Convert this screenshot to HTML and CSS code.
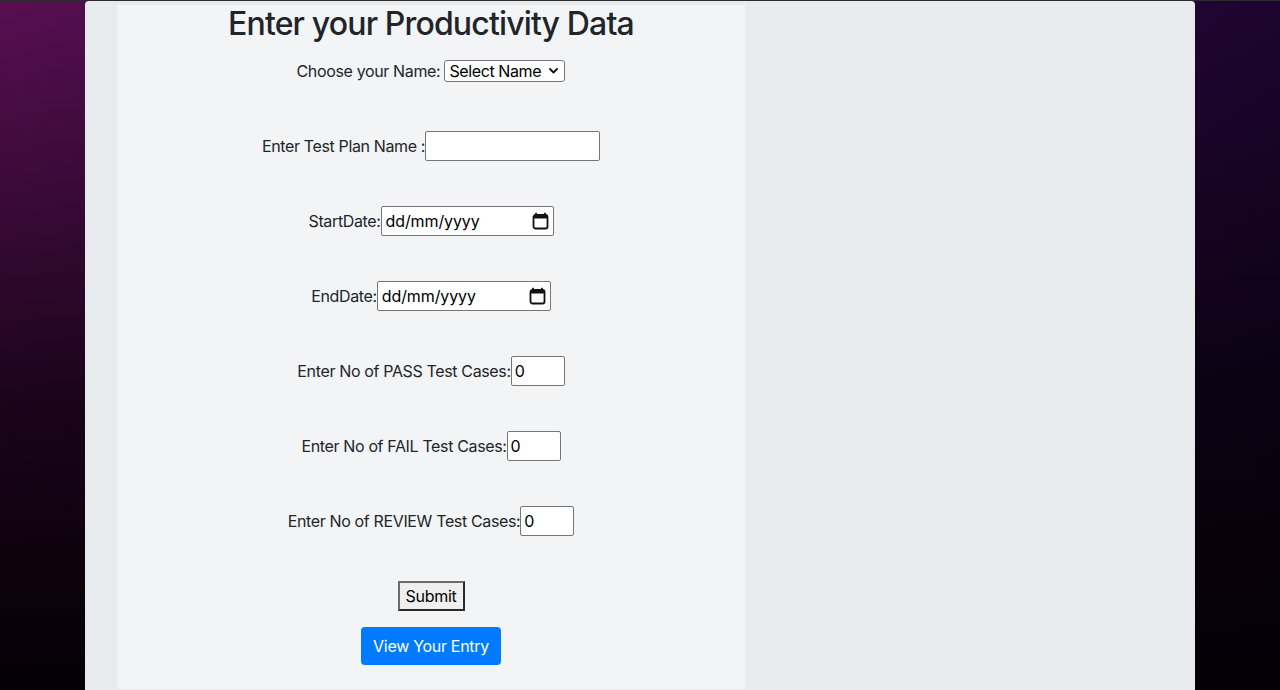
FILE: index.html
```html
<!DOCTYPE html>
<html lang="en">
<head>
<meta charset="utf-8">
<title>Productivity Data</title>
<link rel="stylesheet" href="styles.css">
</head>
<body>
<div class="topline"></div>
<div class="container">
  <div class="jumbotron">
    <div class="panel">
      <h2 class="title">Enter your Productivity Data</h2>
      <form class="form">
        <div class="row">
          <label class="label">Choose your Name:&nbsp;</label>
          <span class="select-wrap">
            <select class="select"><option>Select Name</option></select>
            <svg class="chev" width="9" height="6" viewBox="0 0 9 6"><polyline points="1,1 4.5,4.5 8,1" fill="none" stroke="#111" stroke-width="1.8" stroke-linecap="round" stroke-linejoin="round"/></svg>
          </span>
        </div>
        <div class="row">
          <label class="label">Enter Test Plan Name :</label>
          <input class="input text-input" type="text">
        </div>
        <div class="row">
          <label class="label">StartDate:</label>
          <span class="input date-input"><span class="date-text">dd/mm/yyyy</span>
            <svg class="cal" width="17" height="18" viewBox="0 0 17 18"><rect x="1.5" y="3" width="14" height="13.5" rx="2" fill="none" stroke="#111" stroke-width="1.8"/><rect x="1.5" y="3" width="14" height="3.5" rx="1.5" fill="#111"/><rect x="3.2" y="0.8" width="1.8" height="3" fill="#111"/><rect x="12" y="0.8" width="1.8" height="3" fill="#111"/></svg>
          </span>
        </div>
        <div class="row">
          <label class="label">EndDate:</label>
          <span class="input date-input date-end"><span class="date-text">dd/mm/yyyy</span>
            <svg class="cal" width="17" height="18" viewBox="0 0 17 18"><rect x="1.5" y="3" width="14" height="13.5" rx="2" fill="none" stroke="#111" stroke-width="1.8"/><rect x="1.5" y="3" width="14" height="3.5" rx="1.5" fill="#111"/><rect x="3.2" y="0.8" width="1.8" height="3" fill="#111"/><rect x="12" y="0.8" width="1.8" height="3" fill="#111"/></svg>
          </span>
        </div>
        <div class="row">
          <label class="label">Enter No of PASS Test Cases:</label>
          <input class="input num-input" type="text" value="0">
        </div>
        <div class="row">
          <label class="label">Enter No of FAIL Test Cases:</label>
          <input class="input num-input" type="text" value="0">
        </div>
        <div class="row">
          <label class="label">Enter No of REVIEW Test Cases:</label>
          <input class="input num-input" type="text" value="0">
        </div>
        <div class="row">
          <button class="submit" type="button">Submit</button>
        </div>
        <div class="row-btn">
          <a class="btn-primary" href="#">View Your Entry</a>
        </div>
      </form>
    </div>
  </div>
</div>
</body>
</html>
```
FILE: styles.css
```css
html, body {
  margin: 0;
  padding: 0;
  height: 100%;
}
body {
  font-family: Inter, "Noto Sans", "Liberation Sans", sans-serif;
  color: #212529;
  font-size: 16px;
  overflow: hidden;
  background:
    linear-gradient(to bottom, rgba(0,0,0,0) 0%, rgba(5,0,6,0.75) 60%, #040005 100%),
    linear-gradient(to right, #580f52 0%, #3a0a45 45%, #1d0530 100%);
}
.topline {
  height: 1px;
  background: #2a2a2a;
}
.container {
  width: 1110px;
  margin: 0 auto;
}
.jumbotron {
  background: #e8ebee;
  border-radius: 4px 4px 0 0;
  padding: 4px 32px 0;
  height: 700px;
}
.panel {
  width: 628px;
  background: #f3f4f6;
  height: 684px;
  text-align: center;
}
.title {
  margin: 0;
  font-size: 32px;
  font-weight: 500;
  line-height: 38px;
  letter-spacing: -0.85px;
}
.form {
  display: flex;
  flex-direction: column;
  align-items: center;
  gap: 45px;
  margin-top: 13px;
}
.row {
  display: flex;
  align-items: center;
  justify-content: center;
  height: 30px;
}
.row-btn {
  margin-top: -29px;
}
.label {
  font-size: 16px;
  white-space: pre;
  letter-spacing: -0.36px;
}
.select-wrap {
  position: relative;
  display: inline-block;
}
.select {
  -webkit-appearance: none;
  appearance: none;
  width: 121px;
  height: 22px;
  border: 1px solid #767676;
  border-radius: 3px;
  background: #fff;
  font-family: Inter, "Noto Sans", sans-serif;
  font-size: 16px;
  color: #000;
  padding: 0 0 0 4px;
  letter-spacing: -0.4px;
  margin: 0;
}
.chev {
  position: absolute;
  right: 7px;
  top: 8px;
  pointer-events: none;
}
.input {
  box-sizing: border-box;
  height: 30px;
  border: 1px solid #767676;
  border-radius: 2px;
  background: #fff;
  font-family: Inter, "Noto Sans", sans-serif;
  font-size: 16px;
  color: #000;
  padding: 0 3px;
  margin: 0;
  outline: none;
}
.text-input {
  width: 175px;
}
.num-input {
  width: 54px;
}
.date-input {
  width: 173px;
  display: inline-flex;
  align-items: center;
  justify-content: space-between;
  padding: 0 4px 0 4px;
}
.date-end {
  width: 174px;
}
.date-text {
  letter-spacing: -0.1px;
}
.cal {
  display: block;
}
.submit {
  box-sizing: border-box;
  height: 30px;
  width: 67px;
  padding: 0;
  background: #efefef;
  border: 2px solid;
  border-color: #6b6b6b #2a2a2a #2a2a2a #6b6b6b;
  border-radius: 0;
  font-family: Inter, "Noto Sans", sans-serif;
  font-size: 16px;
  color: #000;
  letter-spacing: -0.3px;
}
.btn-primary {
  display: inline-block;
  box-sizing: border-box;
  width: 140px;
  height: 38px;
  line-height: 38px;
  background: #007bff;
  color: #fff;
  border-radius: 4px;
  text-decoration: none;
  font-size: 16px;
  font-weight: 400;
  letter-spacing: -0.3px;
}
```
